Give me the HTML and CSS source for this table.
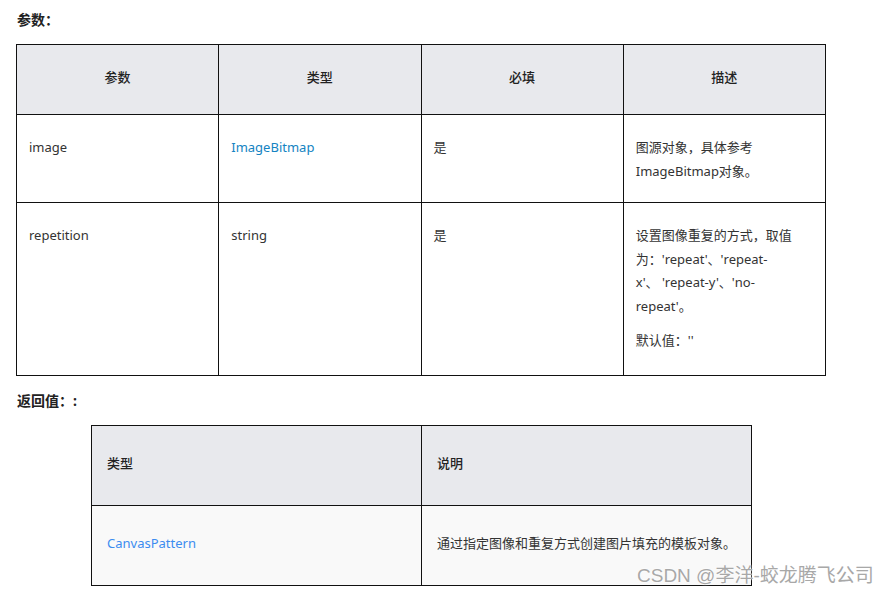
FILE: index.html
```html
<!DOCTYPE html>
<html lang="zh">
<head>
<meta charset="utf-8">
<title>参数</title>
<link rel="stylesheet" href="styles.css">
</head>
<body>
<div class="page">
  <h4 class="section-title">参数：</h4>
  <table class="params">
    <colgroup>
      <col class="c1"><col class="c2"><col class="c3"><col class="c4">
    </colgroup>
    <thead>
      <tr class="head-row">
        <th>参数</th><th>类型</th><th>必填</th><th>描述</th>
      </tr>
    </thead>
    <tbody>
      <tr class="row-a">
        <td>image</td>
        <td><a class="link-dark" href="#">ImageBitmap</a></td>
        <td>是</td>
        <td>图源对象，具体参考<br>ImageBitmap对象。</td>
      </tr>
      <tr class="row-b">
        <td>repetition</td>
        <td>string</td>
        <td>是</td>
        <td>
          <p class="para">设置图像重复的方式，取值<br>为：'repeat'、'repeat-<br>x'、 'repeat-y'、'no-<br>repeat'。</p>
          <p class="para last">默认值：''</p>
        </td>
      </tr>
    </tbody>
  </table>

  <h4 class="section-title second">返回值：:</h4>
  <table class="returns">
    <colgroup>
      <col class="r1"><col class="r2">
    </colgroup>
    <thead>
      <tr class="rhead">
        <th>类型</th><th>说明</th>
      </tr>
    </thead>
    <tbody>
      <tr class="rbody">
        <td><a class="link-light" href="#">CanvasPattern</a></td>
        <td class="nowrap">通过指定图像和重复方式创建图片填充的模板对象。</td>
      </tr>
    </tbody>
  </table>
</div>
<div class="watermark">CSDN @李洋-蛟龙腾飞公司</div>
</body>
</html>
```

FILE: styles.css
```css
html, body {
  margin: 0;
  padding: 0;
  background: #ffffff;
}

body {
  font-family: "Noto Sans", "Noto Sans CJK SC", sans-serif;
  font-size: 13px;
  color: #333333;
  position: relative;
  width: 887px;
  height: 596px;
  overflow: hidden;
}

.page {
  padding: 10px 0 0 16px;
}

.section-title {
  margin: 0 0 0 1px;
  font-size: 14px;
  line-height: 20px;
  font-weight: 700;
  color: #222222;
}

.second {
  margin-top: 15px;
}

table {
  border-collapse: collapse;
}

th, td {
  border: 1px solid #111111;
  padding: 0 12px;
  font-weight: 400;
}

.params {
  margin-top: 14px;
  width: 810px;
  table-layout: fixed;
}

.params th {
  background: #e8e9ed;
  text-align: center;
  height: 63px;
  padding-bottom: 6px;
  color: #222222;
  font-weight: 500;
}

.params td {
  vertical-align: top;
  line-height: 23.5px;
  padding-top: 21px;
  text-align: left;
}

.row-a td {
  height: 66px;
}

.row-b td {
  height: 151px;
  padding-bottom: 0;
}

.para {
  margin: 0;
}

.para.last {
  margin-top: 10.5px;
}

.link-dark {
  color: #1483c2;
  text-decoration: none;
}

.link-light {
  color: #3c8cf0;
  text-decoration: none;
}

.returns {
  margin-top: 14px;
  margin-left: 75px;
  width: 661px;
  table-layout: fixed;
}

.returns th, .returns td {
  padding: 0 15px 6px;
  text-align: left;
  height: 73px;
  vertical-align: middle;
}

.returns th {
  background: #e8e9ed;
  color: #222222;
  font-weight: 500;
}

.returns td {
  background: #f9f9f9;
}

.nowrap {
  white-space: nowrap;
}

.r1 { width: 330px; }

.watermark {
  position: absolute;
  left: 637px;
  top: 565px;
  font-family: "Liberation Sans", "Noto Sans CJK SC", sans-serif;
  font-size: 19px;
  line-height: 22px;
  color: #a8a8a8;
  text-shadow: 0 0 2px #ffffff, 0 0 2px #ffffff;
  white-space: nowrap;
}
```
